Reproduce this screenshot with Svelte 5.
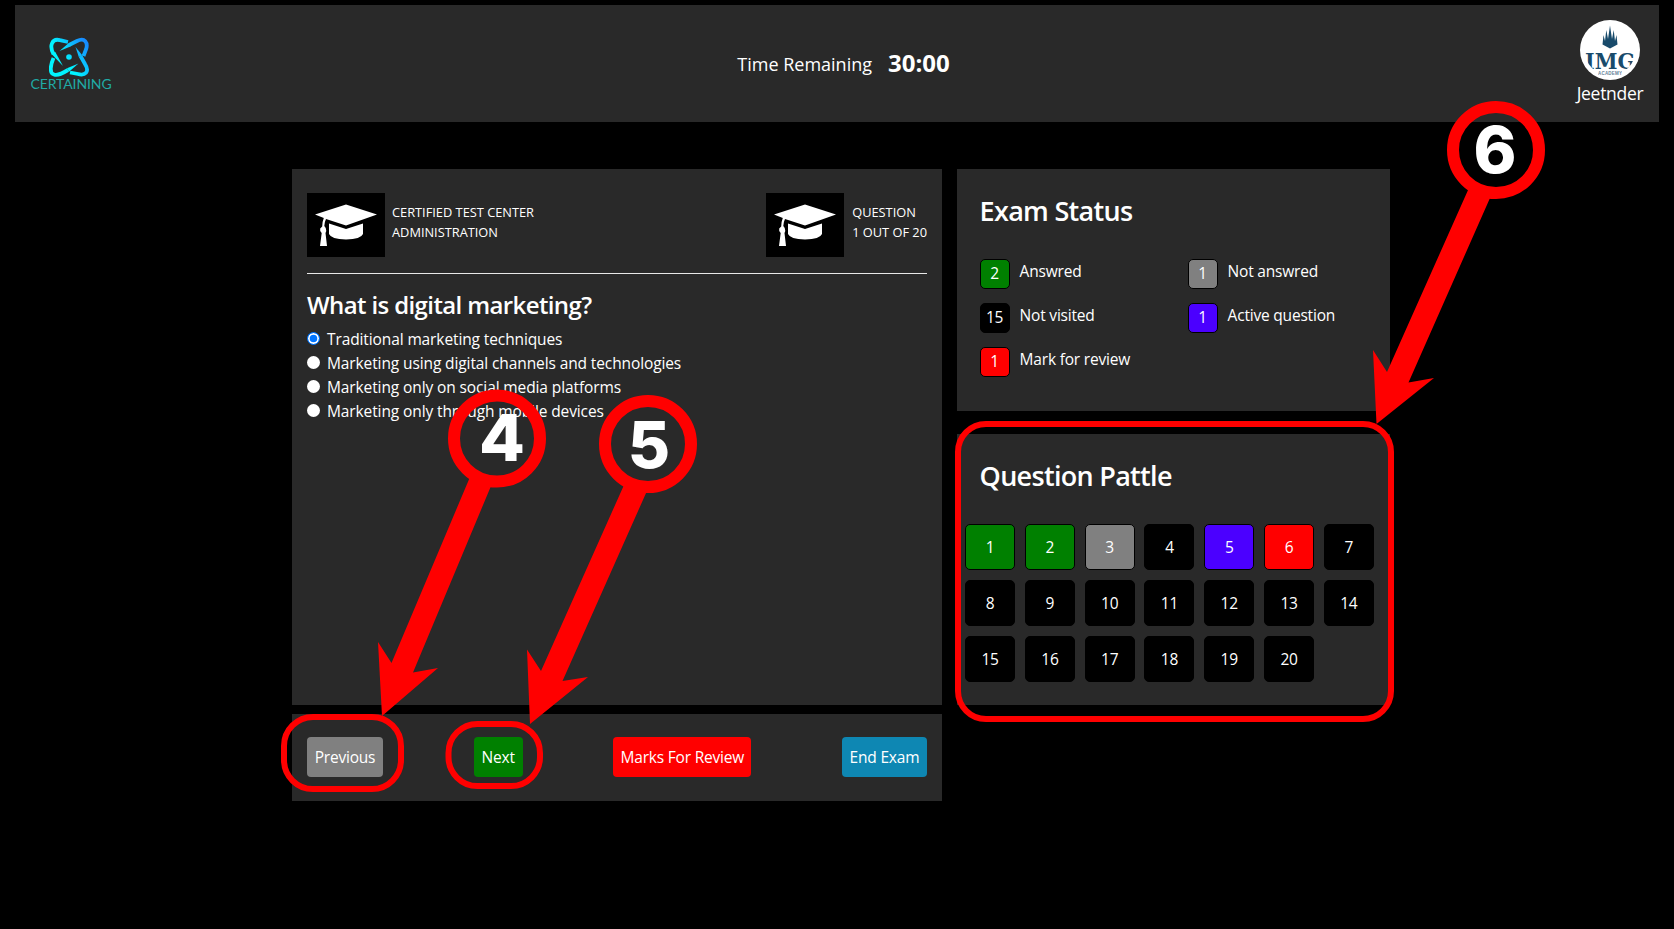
<script>
  const options = [
    'Traditional marketing techniques',
    'Marketing using digital channels and technologies',
    'Marketing only on social media platforms',
    'Marketing only through mobile devices'
  ];
  const statuses = [
    { count: 2, label: 'Answred', kind: 'answered' },
    { count: 1, label: 'Not answred', kind: 'skipped' },
    { count: 15, label: 'Not visited', kind: 'unseen' },
    { count: 1, label: 'Active question', kind: 'active' },
    { count: 1, label: 'Mark for review', kind: 'review' }
  ];
  const kinds = { 1: 'answered', 2: 'answered', 3: 'skipped', 5: 'active', 6: 'review' };
  const cells = Array.from({ length: 20 }, (_, i) => ({ n: i + 1, kind: kinds[i + 1] ?? 'unseen' }));
</script>

{#snippet cap()}
  <svg class="cap" viewBox="0 0 78 64" preserveAspectRatio="none" aria-hidden="true">
    <path d="M8 21.5 39 11.5 70 21.5 39 32.5 19 26 Q17.5 29 17.3 33 Q19.5 35 19.3 38 L18.5 40 20 53 H13 L14.7 40 Q12.5 38 13.2 35.5 L15.2 33.5 Q15.3 28.5 16.8 25 Z" />
    <path d="M22 30.5 39 36 56 30.5 V41 Q54 46 39 46.5 Q24 46 22 41 Z" />
  </svg>
{/snippet}

<div class="page">
  <header>
    <div class="brand">
      <svg viewBox="0 0 40 40" aria-hidden="true">
        <defs>
          <linearGradient id="orbit" gradientUnits="userSpaceOnUse" x1="8" y1="30" x2="38" y2="8">
            <stop offset="0.3" stop-color="#00f4ff" />
            <stop offset="1" stop-color="#168cff" />
          </linearGradient>
        </defs>
        <g fill="none" stroke="url(#orbit)" stroke-width="3.800">
          <path d="M4.500 17C0 9 3 1 11 3.200L19 5" />
          <path d="M20 8 28 4C36 0 39 6 37.200 12L34.500 19" />
          <path d="M31.500 19 36 27C41 35 36 39 29 37L21 35.500" />
          <path d="M4.500 21C1.500 28 0 36 5 37.500C9 39 14 36 19 33" />
        </g>
        <g fill="url(#orbit)">
          <path d="M2.600 17 6.300 15 14 29Z" />
          <path d="M19.500 6.300 21.500 9.500 10.500 14Z" />
          <path d="M29.800 20 33.300 18.300 26.500 10Z" />
          <path d="M18 31.300 20 34.700 29.500 26.500Z" />
          <circle cx="20" cy="20" r="2.800" />
        </g>
      </svg>
      <span>CERTAINING</span>
    </div>
    <div class="timer"><span>Time Remaining</span><strong>30:00</strong></div>
    <div class="user">
      <svg viewBox="0 0 60 60" aria-hidden="true">
        <defs><clipPath id="face"><circle cx="30" cy="30" r="25.500" /></clipPath></defs>
        <circle cx="30" cy="30" r="30" fill="#fff" />
        <g fill="#194b6b">
          <path d="M22.500 24.500 23.500 15 25 21 26.300 10 28 19 30 5.500 32 19 33.700 10 35 21 36.500 15 37.500 24.500 30 28.500Z" />
          <text x="5" y="48.500" textLength="50" lengthAdjust="spacingAndGlyphs" class="mono" clip-path="url(#face)">IMG</text>
          <text x="18" y="54.500" textLength="24" class="tiny">ACADEMY</text>
        </g>
      </svg>
      <span>Jeetnder</span>
    </div>
  </header>

  <main>
    <div class="left">
      <section class="question">
        <div class="meta">
          <div class="tag">{@render cap()}<p>CERTIFIED TEST CENTER<br />ADMINISTRATION</p></div>
          <div class="tag">{@render cap()}<p>QUESTION<br />1 OUT OF 20</p></div>
        </div>
        <h2>What is digital marketing?</h2>
        {#each options as option, i}
          <label class="option"><i class:on={i === 0}></i><span>{option}</span></label>
        {/each}
      </section>
      <nav>
        <button class="skipped" style:width="76px">Previous</button>
        <button class="answered" style:width="49px">Next</button>
        <button class="review" style:width="138px">Marks For Review</button>
        <button class="end" style:width="85px">End Exam</button>
      </nav>
    </div>

    <div class="right">
      <section class="status">
        <h3>Exam Status</h3>
        <div class="legend">
          {#each statuses as s}
            <div class="entry"><b class={s.kind}>{s.count}</b><span>{s.label}</span></div>
          {/each}
        </div>
      </section>
      <section class="palette">
        <h3>Question Pattle</h3>
        <div class="cells">
          {#each cells as c}<button class={c.kind}>{c.n}</button>{/each}
        </div>
      </section>
    </div>
  </main>

  <svg class="notes" viewBox="0 0 1674 929" aria-hidden="true">
    <g fill="none" stroke="#f00" stroke-width="6">
      <rect x="284" y="717" width="117" height="72" rx="29" />
      <rect x="448.500" y="724" width="91.500" height="62" rx="29" />
      <rect x="958" y="424" width="433" height="295" rx="28" />
    </g>
    <g fill="none" stroke="#f00" stroke-width="12">
      <circle cx="497" cy="438.500" r="43" />
      <circle cx="648" cy="444" r="43" />
      <circle cx="1496" cy="150" r="43" />
    </g>
    <g fill="#f00">
      <path d="M470 477 391.500 663 378 642 382 716 438 668 413 672.500 491 486Z" />
      <path d="M624 485 541 671 527 649.500 530 724 588 677 562.500 681 646.500 492Z" />
      <path d="M1468.500 189 1387 372 1373 350 1376.500 424 1434 378 1408.500 382.500 1490 198Z" />
    </g>
    <g class="digits">
      <text x="502" y="461" textLength="46" lengthAdjust="spacingAndGlyphs">4</text>
      <text x="649" y="468">5</text>
      <text x="1495" y="173">6</text>
    </g>
  </svg>
</div>

<style>
  :global(body) { background: #000; }
  .page {
    position: relative;
    width: 1674px;
    height: 929px;
    overflow: hidden;
    box-sizing: border-box;
    padding: 5px 15px 0;
    background: #000;
    color: #fff;
    font: 15.500px/24px "Open Sans", "Noto Sans", sans-serif;
    letter-spacing: -0.2px;
  }
  h2, h3, p { margin: 0; }
  header {
    display: grid;
    grid-template-columns: 1fr auto 1fr;
    height: 117px;
    background: #292929;
  }
  .brand { width: 112px; display: flex; flex-direction: column; align-items: center; padding-top: 32px; }
  .brand svg { width: 40px; height: 40px; margin-right: 5px; }
  .brand span { font: 14px/14px Lato, sans-serif; color: #20aaa5; letter-spacing: -0.1px; }
  .timer { display: flex; align-items: center; gap: 16px; padding-left: 13px; font-size: 18px; letter-spacing: 0; }
  .timer strong { font-size: 24px; margin-top: -2px; }
  .user { justify-self: end; width: 98px; padding-top: 15px; display: flex; flex-direction: column; align-items: center; }
  .user svg { width: 60px; height: 60px; }
  .user span { font-size: 17.500px; letter-spacing: -0.300px; margin-top: 1px; }
  .mono { font: bold 23px "DejaVu Serif", serif; letter-spacing: 0; }
  .tiny { font: bold 4.500px "Liberation Sans", sans-serif; letter-spacing: 0; opacity: 0.7; }
  main { display: flex; gap: 14.600px; padding: 47.400px 0 0 277px; }
  .left { width: 650px; display: flex; flex-direction: column; gap: 8.400px; }
  .question { height: 536px; box-sizing: border-box; padding: 24px 15px 0; background: #292929; }
  .meta { display: flex; justify-content: space-between; height: 81px; border-bottom: 1px solid #e8e8e8; box-sizing: border-box; }
  .tag { display: flex; gap: 7px; font-size: 12.800px; line-height: 20px; letter-spacing: 0; }
  .tag p { padding-top: 9px; }
  .tag + .tag { gap: 8px; }
  .cap { width: 78px; height: 64px; background: #000; fill: #fff; }
  h2 { font-size: 24px; line-height: 30px; font-weight: 600; letter-spacing: -0.620px; margin: 16px 0 7px; }
  .option { display: flex; height: 24px; gap: 7px; align-items: center; letter-spacing: -0.110px; }
  .option i { width: 13px; height: 13px; margin-top: -1px; border-radius: 50%; background: #fff; box-sizing: border-box; }
  .option i.on { border: 1.500px solid #0075ff; box-shadow: inset 0 0 0 1.700px #fff; background: #0075ff; }
  nav { height: 87.300px; box-sizing: border-box; padding: 0 15px; display: flex; align-items: center; justify-content: space-between; background: #292929; }
  button { border: 0; padding: 0; color: #fff; font: inherit; letter-spacing: inherit; white-space: nowrap; border-radius: 4px; }
  nav button { height: 40px; }
  .right { width: 433px; display: flex; flex-direction: column; gap: 23px; }
  .status { height: 241.500px; background: #292929; }
  .palette { height: 271px; background: #292929; }
  h3 { font-size: 27px; line-height: 36px; font-weight: 600; letter-spacing: -0.700px; padding: 24px 23px 0; }
  .legend { display: grid; grid-template-columns: 208px 1fr; grid-auto-rows: 44px; padding: 30px 23px 0; }
  .entry { display: flex; gap: 10px; }
  .entry b { width: 30px; height: 30px; box-sizing: border-box; border: 1px solid #000; border-radius: 5px; text-align: center; font-weight: 400; line-height: 26px; }
  .cells { display: grid; grid-template-columns: repeat(7, 50px); grid-auto-rows: 46px; gap: 10px 9.800px; padding: 30px 0 0 8.500px; }
  .cells button { border: 1px solid #000; border-radius: 5px; }
  .answered { background: #008000; }
  .skipped { background: #808080; }
  .unseen { background: #000; }
  .active { background: #4b00ff; }
  .review { background: #f00; }
  .end { background: #0e87b3; }
  .notes { position: absolute; inset: 0; width: 1674px; height: 929px; pointer-events: none; }
  .digits { fill: #fff; font: 800 65px Inter, sans-serif; letter-spacing: 0; text-anchor: middle; }
</style>
